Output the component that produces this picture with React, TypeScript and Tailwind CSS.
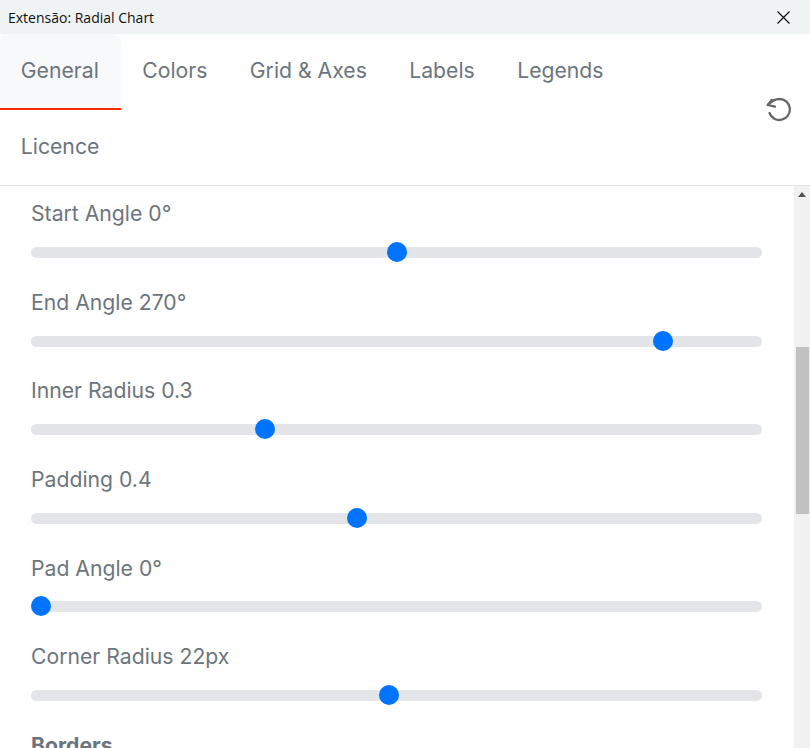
const tabsRow1 = [
  { label: "General", active: true },
  { label: "Colors", active: false },
  { label: "Grid & Axes", active: false },
  { label: "Labels", active: false },
  { label: "Legends", active: false },
];

const sliders = [
  { label: "Start Angle 0°", x: 366 },
  { label: "End Angle 270°", x: 632 },
  { label: "Inner Radius 0.3", x: 234 },
  { label: "Padding 0.4", x: 326 },
  { label: "Pad Angle 0°", x: 10 },
  { label: "Corner Radius 22px", x: 358 },
];

function Tab({ label, active }: { label: string; active?: boolean }) {
  return (
    <div
      className={
        "h-[76px] pl-[20.8px] flex items-center text-[21.2px] leading-none rounded-t-[8px] border-b-2 text-[#6c757d] " +
        (active ? "pr-[22.6px] bg-[#f8f9fa] border-[#ff2a00]" : "pr-[21.6px] border-transparent")
      }
    >
      {label}
    </div>
  );
}

function Slider({ label, x }: { label: string; x: number }) {
  return (
    <div className="h-[88.6px] pl-[31px] pr-[32px]">
      <div className="text-[21.2px] leading-[26px] text-[#6c757d]">{label}</div>
      <div className="relative mt-[20.8px] h-[11px] rounded-full bg-[#e4e5e9]">
        <div
          className="absolute top-[-5px] w-[20px] h-[20px] -ml-[10px] rounded-full bg-[#0073ff]"
          style={{ left: x }}
        />
      </div>
    </div>
  );
}

export default function App() {
  return (
    <div className="w-[810px] h-[748px] overflow-hidden bg-white flex flex-col font-['Inter',sans-serif]">
      <div className="h-[34px] shrink-0 bg-[#eff3f4] flex items-center justify-between pl-[8px] pr-[20px]">
        <span className="text-[14px] text-[#111] font-['Open_Sans',sans-serif]">Extensão: Radial Chart</span>
        <svg width="13" height="13" viewBox="0 0 13 13" fill="none" stroke="#111" strokeWidth="1.2">
          <path d="M0.5 0.5 L12.5 12.5 M12.5 0.5 L0.5 12.5" />
        </svg>
      </div>

      <div className="h-[152px] shrink-0 border-b border-[#e2e3e5] flex justify-between">
        <div className="flex flex-wrap content-start w-[700px]">
          {tabsRow1.map((t) => (
            <Tab key={t.label} label={t.label} active={t.active} />
          ))}
          <div className="w-full">
            <div className="inline-flex">
              <Tab label="Licence" />
            </div>
          </div>
        </div>
        <div className="pt-[62px] pr-[18px]">
          <svg width="26" height="26" viewBox="0 0 26 26" fill="none" stroke="#666" strokeWidth="2.3" strokeLinecap="round" strokeLinejoin="round">
            <path d="M3.5 17A10.5 10.5 0 1 0 13.5 3C9 3 5 5.5 1.8 9" />
            <path d="M5.7 4L1.8 9L9 10.7" />
          </svg>
        </div>
      </div>

      <div className="flex-1 min-h-0 flex overflow-hidden">
        <div className="flex-1 pt-[14.2px] overflow-hidden">
          {sliders.map((s) => (
            <Slider key={s.label} label={s.label} x={s.x} />
          ))}
          <div className="pl-[31px] text-[21.2px] leading-[26px] font-bold text-[#6c757d]">Borders</div>
        </div>
        <div className="w-[16px] shrink-0 bg-[#f1f1f1] flex flex-col items-center relative">
          <svg width="8" height="5" viewBox="0 0 8 5" className="mt-[6px]">
            <path d="M4 0 L8 5 L0 5 Z" fill="#505050" />
          </svg>
          <div className="absolute top-[161px] left-[2px] w-[13px] h-[167px] bg-[#c1c1c1]" />
        </div>
      </div>
    </div>
  );
}
